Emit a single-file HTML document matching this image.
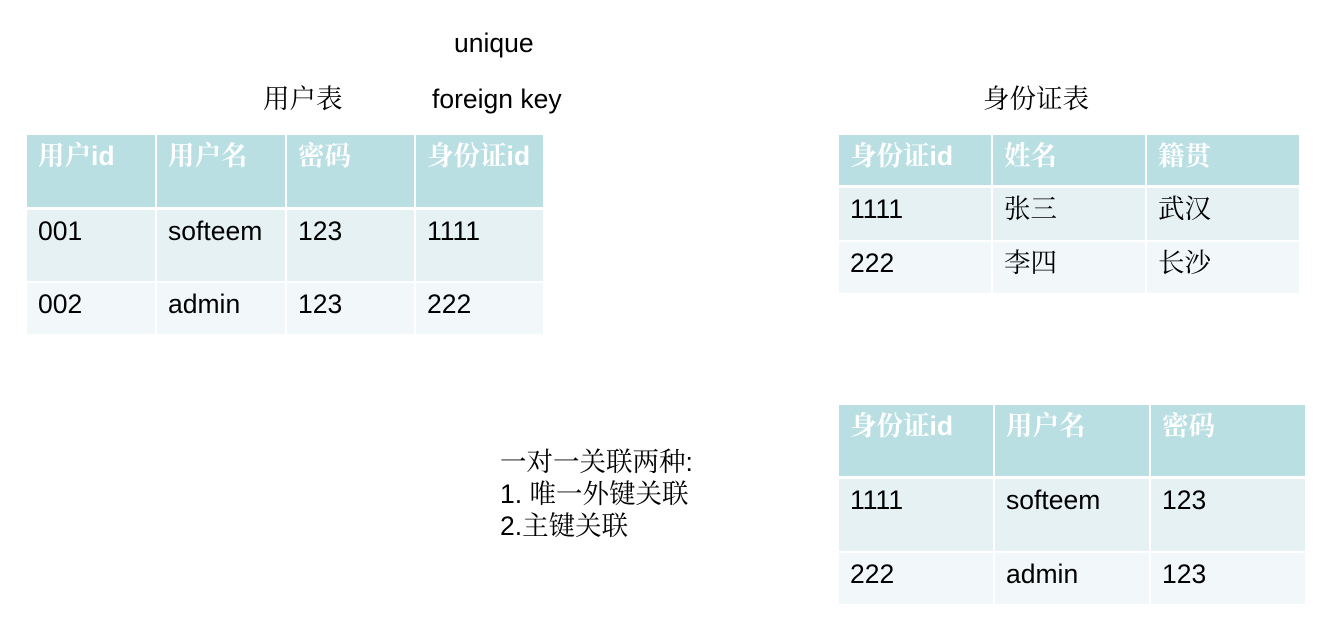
<!DOCTYPE html>
<html><head><meta charset="utf-8"><style>
body{margin:0;width:1332px;height:621px;background:#fff;position:relative;overflow:hidden;font-family:"Liberation Sans","Noto Serif CJK SC",serif;color:#000}
.t{position:absolute;font-size:26.5px;line-height:30px;white-space:nowrap}
.c{position:absolute;box-sizing:border-box;padding:6px 0 0 11px;font-size:26.5px;line-height:30px;white-space:nowrap}
.h{background:#b9dfe3;color:#fff;font-weight:bold}
.r1{background:#e6f1f3}
.r2{background:#f2f7f9}
</style></head><body>
<div class="t" style="left:454px;top:28px">unique</div>
<div class="t" style="left:263px;top:84px">用户表</div>
<div class="t" style="left:432px;top:84px">foreign key</div>
<div class="t" style="left:983px;top:84px">身份证表</div>
<div class="t" style="left:500px;top:446px;line-height:32px">一对一关联两种:<br>1. 唯一外键关联<br>2.主键关联</div>

<!-- table 1 -->
<div class="c h" style="left:27px;top:135px;width:128px;height:72px">用户id</div>
<div class="c h" style="left:157px;top:135px;width:128px;height:72px">用户名</div>
<div class="c h" style="left:287px;top:135px;width:127px;height:72px">密码</div>
<div class="c h" style="left:416px;top:135px;width:127px;height:72px">身份证id</div>
<div class="c r1" style="left:27px;top:210px;width:128px;height:71px">001</div>
<div class="c r1" style="left:157px;top:210px;width:128px;height:71px">softeem</div>
<div class="c r1" style="left:287px;top:210px;width:127px;height:71px">123</div>
<div class="c r1" style="left:416px;top:210px;width:127px;height:71px">1111</div>
<div class="c r2" style="left:27px;top:283px;width:128px;height:51px">002</div>
<div class="c r2" style="left:157px;top:283px;width:128px;height:51px">admin</div>
<div class="c r2" style="left:287px;top:283px;width:127px;height:51px">123</div>
<div class="c r2" style="left:416px;top:283px;width:127px;height:51px">222</div>

<!-- table 2 -->
<div class="c h" style="left:839px;top:135px;width:152px;height:50px">身份证id</div>
<div class="c h" style="left:993px;top:135px;width:152px;height:50px">姓名</div>
<div class="c h" style="left:1147px;top:135px;width:152px;height:50px">籍贯</div>
<div class="c r1" style="left:839px;top:188px;width:152px;height:52px">1111</div>
<div class="c r1" style="left:993px;top:188px;width:152px;height:52px">张三</div>
<div class="c r1" style="left:1147px;top:188px;width:152px;height:52px">武汉</div>
<div class="c r2" style="left:839px;top:242px;width:152px;height:51px">222</div>
<div class="c r2" style="left:993px;top:242px;width:152px;height:51px">李四</div>
<div class="c r2" style="left:1147px;top:242px;width:152px;height:51px">长沙</div>

<!-- table 3 -->
<div class="c h" style="left:839px;top:405px;width:154px;height:71px">身份证id</div>
<div class="c h" style="left:995px;top:405px;width:154px;height:71px">用户名</div>
<div class="c h" style="left:1151px;top:405px;width:154px;height:71px">密码</div>
<div class="c r1" style="left:839px;top:479px;width:154px;height:72px">1111</div>
<div class="c r1" style="left:995px;top:479px;width:154px;height:72px">softeem</div>
<div class="c r1" style="left:1151px;top:479px;width:154px;height:72px">123</div>
<div class="c r2" style="left:839px;top:553px;width:154px;height:51px">222</div>
<div class="c r2" style="left:995px;top:553px;width:154px;height:51px">admin</div>
<div class="c r2" style="left:1151px;top:553px;width:154px;height:51px">123</div>
</body></html>
